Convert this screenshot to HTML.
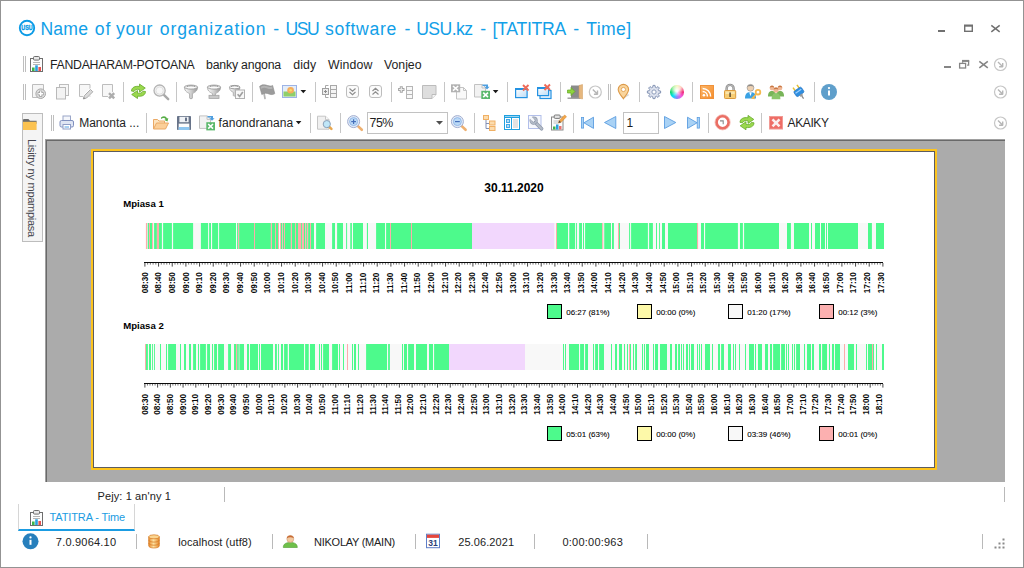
<!DOCTYPE html><html><head><meta charset="utf-8"><title>USU</title><style>
html,body{margin:0;padding:0;}
body{width:1024px;height:568px;position:relative;overflow:hidden;background:#fff;font-family:"Liberation Sans",sans-serif;color:#222;}
.a{position:absolute;}
.win{position:absolute;left:0;top:0;width:1022px;height:566px;border:1px solid #939393;}
.t{position:absolute;white-space:nowrap;line-height:1;}
.sep{position:absolute;width:1px;background:#c6c6c6;}
.grip{position:absolute;width:1px;background:#bebebe;}
svg{position:absolute;overflow:visible;}
.ui{font-size:13px;color:#1e1e1e;}
.st{font-size:11.5px;color:#222;}
</style></head><body>
<div class="win"></div>
<!-- s_title -->
<svg style="left:18px;top:19px" width="18" height="18" viewBox="0 0 18 18"><circle cx="9" cy="9" r="7.200" fill="#fff" stroke="#0c9be6" stroke-width="1.900"/><text x="9" y="11.400" font-size="6.800" font-weight="bold" text-anchor="middle" fill="#0c9be6" stroke="#0c9be6" stroke-width="0.350" font-family="Liberation Sans, sans-serif" textLength="11.400" lengthAdjust="spacingAndGlyphs">USU</text></svg>
<div class="t" style="left:40.50px;top:21.00px;font-size:17.6px;color:#12a0e8;letter-spacing:0.169px;">Name</div>
<div class="t" style="left:94.75px;top:21.00px;font-size:17.6px;color:#12a0e8;letter-spacing:1.054px;">of</div>
<div class="t" style="left:116.00px;top:21.00px;font-size:17.6px;color:#12a0e8;letter-spacing:0.673px;">your</div>
<div class="t" style="left:159.75px;top:21.00px;font-size:17.6px;color:#12a0e8;letter-spacing:0.894px;">organization</div>
<div class="t" style="left:273.20px;top:21.00px;font-size:17.6px;color:#12a0e8;">-</div>
<div class="t" style="left:285.50px;top:21.00px;font-size:17.6px;color:#12a0e8;letter-spacing:-1.500px;">USU</div>
<div class="t" style="left:325.00px;top:21.00px;font-size:17.6px;color:#12a0e8;letter-spacing:0.675px;">software</div>
<div class="t" style="left:404.40px;top:21.00px;font-size:17.6px;color:#12a0e8;">-</div>
<div class="t" style="left:416.25px;top:21.00px;font-size:17.6px;color:#12a0e8;letter-spacing:-0.583px;">USU.kz</div>
<div class="t" style="left:480.30px;top:21.00px;font-size:17.6px;color:#12a0e8;">-</div>
<div class="t" style="left:492.50px;top:21.00px;font-size:17.6px;color:#12a0e8;letter-spacing:-0.276px;">[TATITRA</div>
<div class="t" style="left:573.20px;top:21.00px;font-size:17.6px;color:#12a0e8;">-</div>
<div class="t" style="left:586.25px;top:21.00px;font-size:17.6px;color:#12a0e8;letter-spacing:0.404px;">Time]</div>
<svg style="left:930px;top:18px" width="80" height="20" viewBox="930 18 80 20" fill="none" stroke="#707070" stroke-width="1.400"><path d="M938 31h7" stroke-width="2"/><rect x="964.700" y="25.700" width="7.600" height="5.600"/><path d="M964 25.500h9" stroke-width="2"/><path d="M991.300 25.400L999.700 31.800M999.700 25.400L991.300 31.800" stroke-width="1.500"/></svg>
<!-- s_menu -->
<div class="grip" style="left:23px;top:56px;height:16px"></div><div class="grip" style="left:25px;top:56px;height:16px"></div>
<svg style="left:30px;top:56px" width="13" height="16" viewBox="0 0 13 16"><rect x="0.5" y="2.5" width="12" height="13" fill="#fdfdfd" stroke="#6e6e6e"/><rect x="3.5" y="0.5" width="6" height="3.6" rx="1" fill="#e8e8e8" stroke="#6e6e6e"/><path d="M3 6.5h7M3 8.5h7" stroke="#b5b5b5" stroke-width="1"/><rect x="2" y="11.5" width="2.6" height="3.5" fill="#3cb54a"/><rect x="5.2" y="9.3" width="2.6" height="5.7" fill="#2b9fe0"/><rect x="8.4" y="11" width="2.6" height="4" fill="#e8534f"/></svg>
<div class="t" style="left:50.00px;top:59.00px;font-size:12.3px;color:#1e1e1e;letter-spacing:-0.275px;">FANDAHARAM-POTOANA</div>
<div class="t" style="left:206.00px;top:59.00px;font-size:12.3px;color:#1e1e1e;letter-spacing:-0.190px;">banky angona</div>
<div class="t" style="left:293.30px;top:59.00px;font-size:12.3px;color:#1e1e1e;letter-spacing:0.109px;">didy</div>
<div class="t" style="left:328.00px;top:59.00px;font-size:12.3px;color:#1e1e1e;letter-spacing:0.125px;">Window</div>
<div class="t" style="left:384.00px;top:59.00px;font-size:12.3px;color:#1e1e1e;letter-spacing:-0.020px;">Vonjeo</div>
<svg style="left:940px;top:56px" width="70" height="18" viewBox="940 56 70 18" fill="none" stroke="#858585" stroke-width="1.3"><path d="M944 67h7" stroke-width="2"/><path d="M962.600 61.200h6v4h-1.500M962.600 61.200v1.600" /><path d="M962 60.800h7.200" stroke-width="1.800"/><rect x="959.6" y="63.4" width="6" height="4.6" fill="#fff"/><path d="M979.300 61.300L987.800 67.800M987.800 61.300L979.300 67.800" stroke-width="1.600"/><g fill="none" stroke="#c6c6c6" stroke-width="1.200"><circle cx="1000.5" cy="64.5" r="6"/><path d="M998.0 62.0l4.500 4.500M1002.7 66.9v-3.800M1002.9 66.7h-3.800" stroke="#b6b6b6" stroke-width="1.400"/></g></svg>
<!-- s_tb1 -->
<div class="grip" style="left:23px;top:84px;height:16px"></div><div class="grip" style="left:25px;top:84px;height:16px"></div>
<div class="sep" style="left:123px;top:82px;height:20px;background:#c6c6c6"></div>
<div class="sep" style="left:176px;top:82px;height:20px;background:#c6c6c6"></div>
<div class="sep" style="left:252px;top:82px;height:20px;background:#c6c6c6"></div>
<div class="sep" style="left:315px;top:82px;height:20px;background:#c6c6c6"></div>
<div class="sep" style="left:391px;top:82px;height:20px;background:#c6c6c6"></div>
<div class="sep" style="left:444px;top:82px;height:20px;background:#c6c6c6"></div>
<div class="sep" style="left:507px;top:82px;height:20px;background:#c6c6c6"></div>
<div class="sep" style="left:560px;top:82px;height:20px;background:#c6c6c6"></div>
<div class="sep" style="left:639px;top:82px;height:20px;background:#c6c6c6"></div>
<div class="sep" style="left:692px;top:82px;height:20px;background:#c6c6c6"></div>
<div class="sep" style="left:814px;top:82px;height:20px;background:#c6c6c6"></div>
<div class="grip" style="left:608px;top:84px;height:16px"></div><div class="grip" style="left:610px;top:84px;height:16px"></div>
<div class="a" style="left:670.200px;top:85.200px;width:13.600px;height:13.600px;border-radius:50%;background:radial-gradient(circle at 48% 42%,#fff 0,rgba(255,255,255,0.85) 12%,rgba(255,255,255,0) 55%),conic-gradient(from 0deg,#f6f6b8,#ffcfc0 40deg,#f0307c 90deg,#f25ce0 135deg,#8c84ff 180deg,#08e0f6 225deg,#06d86c 270deg,#a4f09c 320deg,#f6f6b8 360deg)"></div>
<svg style="left:0;top:0" width="1024" height="140" viewBox="0 0 1024 140"><g transform="translate(32 84)"><path d="M0.500 0.500h11v13h-11z" fill="#f5f5f5" stroke="#bdbdbd"/><circle cx="8.700" cy="9.700" r="4.800" fill="#dedede" stroke="#a9a9a9"/><path d="M8.700 6.700v6M5.700 9.700h6" stroke="#9c9c9c" stroke-width="3"/><path d="M8.700 7.300v4.800M6.300 9.700h4.800" stroke="#fff" stroke-width="1.500"/></g>
<g transform="translate(56 84)"><rect x="3.500" y="0.500" width="9" height="11" fill="#f7f7f7" stroke="#bdbdbd"/><rect x="0.500" y="3.500" width="9" height="11.500" fill="#f3f3f3" stroke="#b9b9b9"/></g>
<g transform="translate(79 84)"><path d="M0.500 0.500h10.500v12h-10.500z" fill="#f7f7f7" stroke="#bdbdbd"/><path d="M4.300 15l1-3.300 6.200-6.200 2.300 2.300-6.200 6.200z" fill="#d9d9d9" stroke="#fff" stroke-width="2.200"/><path d="M4.300 15l1-3.300 6.200-6.200 2.300 2.300-6.200 6.200z" fill="#dadada" stroke="#a4a4a4" stroke-width="0.900"/><path d="M4.300 15l0.600-2 1.400 1.400z" fill="#8a8a8a"/></g>
<g transform="translate(102 84)"><path d="M0.500 0.500h10v12h-10z" fill="#f7f7f7" stroke="#bdbdbd"/><path d="M7 9.200l5.200 5.200M12.200 9.200l-5.200 5.200" stroke="#fff" stroke-width="4"/><path d="M7 9.200l5.200 5.200M12.200 9.200l-5.200 5.200" stroke="#adadad" stroke-width="2.500"/></g>
<g transform="translate(130.5 83.5)"><path d="M1 7.600c0-3.600 3.600-5.400 8-4.600v-2.400l5.800 4-5.800 4v-2.600c-2.600-0.500-4.600 0.100-5.400 1.900z" fill="#9ad84e" stroke="#67ab2b" stroke-width="0.800" stroke-linejoin="round"/><path d="M1 7.600c0-3.600 3.600-5.400 8-4.600v-2.400l5.800 4-5.800 4v-2.600c-2.600-0.500-4.600 0.100-5.400 1.900z" transform="rotate(180 8 7.800)" fill="#9ad84e" stroke="#67ab2b" stroke-width="0.800" stroke-linejoin="round"/></g>
<g transform="translate(153 84)"><path d="M10.6 10.6l4.600 4.600" stroke="#a9a9a9" stroke-width="2.4" stroke-linecap="round"/><circle cx="6.600" cy="6.600" r="5.600" fill="#f0f0f0" stroke="#b3b3b3" stroke-width="1.3"/><circle cx="6.600" cy="6.600" r="3.600" fill="#f8f8f8" stroke="#dadada" stroke-width="0.8"/></g>
<g transform="translate(184 84.5)"><defs><linearGradient id="fg" x1="0" y1="0" x2="1" y2="0"><stop offset="0" stop-color="#fbfbfb"/><stop offset="0.5" stop-color="#d0d0d0"/><stop offset="1" stop-color="#979797"/></linearGradient></defs><path d="M0.400 2.600C0.400 7.2 4.4 8.3 5.6 9.2V13.6a1.400 0.600 0 0 0 2.800 0V9.2C9.6 8.3 13.6 7.2 13.6 2.600z" fill="url(#fg)" stroke="#a2a2a2" stroke-width="0.800"/><ellipse cx="7.0" cy="2.600" rx="6.6" ry="2.0" fill="#fbfbfb" stroke="#9c9c9c" stroke-width="0.900"/><path d="M2.5 2.300c1.600-1.300 7.4-1.300 9.0 0" fill="none" stroke="#8e8e8e" stroke-width="0.900"/></g>
<g transform="translate(207 84.5)"><defs><linearGradient id="fg" x1="0" y1="0" x2="1" y2="0"><stop offset="0" stop-color="#fbfbfb"/><stop offset="0.5" stop-color="#d0d0d0"/><stop offset="1" stop-color="#979797"/></linearGradient></defs><path d="M0.400 2.600C0.400 7.2 4.4 8.3 5.6 9.2V11a1.400 0.600 0 0 0 2.800 0V9.2C9.6 8.3 13.6 7.2 13.6 2.600z" fill="url(#fg)" stroke="#a2a2a2" stroke-width="0.800"/><ellipse cx="7.0" cy="2.600" rx="6.6" ry="2.0" fill="#fbfbfb" stroke="#9c9c9c" stroke-width="0.900"/><path d="M2.5 2.300c1.600-1.300 7.4-1.300 9.0 0" fill="none" stroke="#8e8e8e" stroke-width="0.900"/><rect x="2" y="10.800" width="10" height="3.200" fill="#c9c9c9" stroke="#a6a6a6" stroke-width="0.800"/></g>
<g transform="translate(229 84.5)"><defs><linearGradient id="fg" x1="0" y1="0" x2="1" y2="0"><stop offset="0" stop-color="#fbfbfb"/><stop offset="0.5" stop-color="#d0d0d0"/><stop offset="1" stop-color="#979797"/></linearGradient></defs><path d="M0.400 2.600C0.400 6.12 3.1 7.055000000000001 4.300000000000001 7.819999999999999V11a1.400 0.600 0 0 0 2.800 0V7.819999999999999C8.3 7.055000000000001 11.0 6.12 11.0 2.600z" fill="url(#fg)" stroke="#a2a2a2" stroke-width="0.800"/><ellipse cx="5.7" cy="2.600" rx="5.3" ry="1.7" fill="#fbfbfb" stroke="#9c9c9c" stroke-width="0.900"/><path d="M1.8300000000000003 2.300c1.600-1.300 6.140000000000001-1.300 7.74 0" fill="none" stroke="#8e8e8e" stroke-width="0.900"/><rect x="6.500" y="5.500" width="9" height="8.500" fill="#f8f8f8" stroke="#b0b0b0"/><path d="M8.600 9.800l2 2.200 3.200-4.400" fill="none" stroke="#a0a0a0" stroke-width="1.700"/></g>
<g transform="translate(259 84)"><path d="M3.600 1.500l2.400 13" stroke="#b4b4b4" stroke-width="1.700" stroke-linecap="round"/><path d="M0.600 2.400c3-2.400 5.800-1.600 8.200-0.800 2.200 0.700 3.600 0.500 4.800-0.200l2.200 8.200c-1.600 1.200-3.600 1.300-5.800 0.400-2.400-1-4.600-1.200-7.200 0.600z" fill="#9b9b9b" stroke="#8b8b8b" stroke-width="0.600"/><path d="M1.500 3c2.600-1.800 5-1.200 7.200-0.400 1.800 0.600 3.200 0.600 4.400 0l0.500 2c-1.600 0.800-3.400 0.600-5.200-0.100-2-0.800-4.200-1-6.300 0.300z" fill="#b4b4b4"/></g>
<g transform="translate(282 85)"><rect x="0.500" y="0.500" width="14" height="12" fill="#e3edf9" stroke="#9db3e6"/><rect x="1.500" y="6.500" width="12" height="5" fill="#8fcf6a"/><circle cx="8.600" cy="5.200" r="3.300" fill="#f6ad5c"/><circle cx="8.600" cy="5.200" r="1.300" fill="#f8dc6a"/></g>
<g transform="translate(300.5 90)"><path d="M0 0h5.600l-2.800 3.200z" fill="#1a1a1a"/></g>
<g transform="translate(322 85)"><rect x="8.500" y="0.500" width="6" height="12" fill="#f4f4f4" stroke="#a8a8a8"/><path d="M8.500 4.500h6M8.500 8.500h6" stroke="#a8a8a8"/><path d="M6.500 0.500h-3v12h3" fill="none" stroke="#a8a8a8"/><rect x="0.500" y="3.500" width="6" height="6" fill="#ededed" stroke="#a0a0a0"/><path d="M3.500 5v3M2 6.500h3" stroke="#8c8c8c"/></g>
<g transform="translate(346 85)"><rect x="0.500" y="0.500" width="12" height="12" rx="2.500" fill="#fbfbfb" stroke="#bdbdbd"/><path d="M3.500 3.500l3 2.600 3-2.600M3.500 7l3 2.600 3-2.600" fill="none" stroke="#8e8e8e" stroke-width="1.200"/></g>
<g transform="translate(369 85)"><rect x="0.500" y="0.500" width="12" height="12" rx="2.500" fill="#fbfbfb" stroke="#bdbdbd"/><path d="M3.500 6l3-2.600 3 2.600M3.500 9.500l3-2.600 3 2.600" fill="none" stroke="#8e8e8e" stroke-width="1.200"/></g>
<g transform="translate(398 86)"><path d="M3.300 0.300v6.400M0.100 3.500h6.400" stroke="#a6a6a6" stroke-width="3"/><path d="M3.300 1.200v4.600M1 3.500h4.600" stroke="#efefef" stroke-width="1.200"/><rect x="8.500" y="0.500" width="6" height="12" fill="#f8f8f8" stroke="#b6b6b6"/><path d="M8.500 4.500h6M8.500 8.500h6" stroke="#b6b6b6"/></g>
<g transform="translate(422 85)"><path d="M0.500 0.500h13.500v9l-4 4h-9.500z" fill="#dedede" stroke="#bcbcbc"/><path d="M14 9.500h-4v4" fill="#f6f6f6" stroke="#bcbcbc"/></g>
<g transform="translate(451 84)"><path d="M5.500 3.500h7l3 3v8.500h-10z" fill="#f9f9f9" stroke="#c4c4c4"/><path d="M12.500 3.500v3h3" fill="none" stroke="#c4c4c4"/><rect x="0" y="0.300" width="9.200" height="8" fill="#b2b2b2"/><path d="M2 2l5.200 4.600M7.200 2l-5.200 4.600" stroke="#fff" stroke-width="1.600"/></g>
<g transform="translate(474 84)"><path d="M0.500 0.500h8l3 3v9.500h-11z" fill="#f2f2f2" stroke="#c2c2c2"/><path d="M8 1v3h3" fill="none" stroke="#c2c2c2"/><path d="M8.500 0.600h5.500v2.200h1.600l-2.600 2.600-2.600-2.600h1.600v-0.800h-3.500z" fill="#4f9fe0"/><rect x="7.300" y="6.800" width="8.700" height="8.200" fill="#5bb86c"/><path d="M9.200 8.600l4.800 4.600M14 8.600l-4.800 4.600" stroke="#fff" stroke-width="1.600"/></g>
<g transform="translate(492.8 90)"><path d="M0 0h5.600l-2.800 3.200z" fill="#1a1a1a"/></g>
<g transform="translate(515 84)"><defs><linearGradient id="wg" x1="0" y1="0" x2="1" y2="1"><stop offset="0" stop-color="#fff"/><stop offset="1" stop-color="#bcdcf6"/></linearGradient></defs><rect x="0.600" y="4.600" width="11.500" height="9" fill="url(#wg)" stroke="#2492e2" stroke-width="1.200"/><path d="M0.600 5.200h11.500" stroke="#2492e2" stroke-width="1.600"/><path d="M8 1l5.500 5.500M13.500 1l-5.500 5.500" stroke="#ee6a58" stroke-width="1.900"/></g>
<g transform="translate(537 84)"><defs><linearGradient id="wg" x1="0" y1="0" x2="1" y2="1"><stop offset="0" stop-color="#fff"/><stop offset="1" stop-color="#bcdcf6"/></linearGradient></defs><rect x="3" y="6.500" width="11" height="8" fill="#eaf3fc" stroke="#2492e2" stroke-width="1.200"/><rect x="0.600" y="3.600" width="11" height="8" fill="url(#wg)" stroke="#2492e2" stroke-width="1.200"/><path d="M0.600 4.200h11" stroke="#2492e2" stroke-width="1.600"/><path d="M7.500 0.500l5.500 5.500M13 0.500l-5.500 5.500" stroke="#ee6a58" stroke-width="1.900"/></g>
<g transform="translate(567 84.5)"><rect x="4" y="1" width="9" height="12.500" fill="#8b8b8b"/><path d="M0.500 13.700h13" stroke="#9a9a9a" stroke-width="1.400"/><path d="M12 1l3.500-1v14.500l-3.500-1z" fill="#e6b77e" stroke="#d09a5c" stroke-width="0.500"/><path d="M0.500 5.500h3.500v-2.500l4 4-4 4v-2.500h-3.500z" fill="#8fd43e" stroke="#62a822" stroke-width="0.700"/></g>
<g fill="none" stroke="#c6c6c6" stroke-width="1.200"><circle cx="595.3" cy="92" r="6"/><path d="M592.8 89.5l4.500 4.500M597.5 94.4v-3.800M597.6999999999999 94.2h-3.800" stroke="#b6b6b6" stroke-width="1.400"/></g>
<g transform="translate(617.8 84.3)"><path d="M6 14.200l5.500-3.600-1.500-1z" fill="#d6d6d6"/><path d="M5.600 14.500c-3-4.200-5.200-6.400-5.200-9.200a5.200 5.200 0 0 1 10.400 0c0 2.800-2.200 5-5.200 9.200z" fill="#fad59c" stroke="#dc9a4a" stroke-width="1.100"/><circle cx="5.600" cy="5.200" r="2.100" fill="#fff" stroke="#dc9a4a" stroke-width="0.800"/></g>
<g transform="translate(647 85)"><path d="M13.62 6.00 L13.62 8.00 L11.72 8.31 L11.26 9.41 L12.39 10.98 L10.98 12.39 L9.42 11.26 L8.31 11.72 L8.00 13.62 L6.00 13.62 L5.69 11.72 L4.59 11.26 L3.02 12.39 L1.61 10.98 L2.74 9.42 L2.28 8.31 L0.38 8.00 L0.38 6.00 L2.28 5.69 L2.74 4.59 L1.61 3.02 L3.02 1.61 L4.58 2.74 L5.69 2.28 L6.00 0.38 L8.00 0.38 L8.31 2.28 L9.41 2.74 L10.98 1.61 L12.39 3.02 L11.26 4.58 L11.72 5.69z" fill="#dde2ee" stroke="#8494b4" stroke-width="1" stroke-linejoin="round"/><circle cx="7" cy="7" r="2.100" fill="#fff" stroke="#8494b4" stroke-width="0.900"/></g>
<g transform="translate(700 85)"><defs><linearGradient id="rg" x1="0" y1="0" x2="1" y2="1"><stop offset="0" stop-color="#fbb568"/><stop offset="1" stop-color="#f68e2c"/></linearGradient></defs><rect x="0.500" y="0.500" width="13" height="13" fill="url(#rg)" stroke="#f0923a"/><circle cx="3.900" cy="10.300" r="1.300" fill="#fff"/><path d="M2.600 6.600a4.800 4.800 0 0 1 4.800 4.800M2.600 3.400a8 8 0 0 1 8 8" fill="none" stroke="#fff" stroke-width="1.500"/></g>
<g transform="translate(724 84)"><path d="M2.600 7v-2.600a3.500 3.500 0 0 1 7 0v2.600" fill="none" stroke="#8e8e8e" stroke-width="2.400"/><path d="M2.600 7v-2.600a3.500 3.500 0 0 1 7 0v2.600" fill="none" stroke="#c8c8c8" stroke-width="0.800"/><rect x="0.500" y="6.500" width="11.200" height="8" rx="0.800" fill="#f7cd74" stroke="#dc9a3c"/><rect x="1.500" y="7.500" width="9.200" height="2.500" fill="#fbe4a8"/><path d="M6.100 8.600v4.400" stroke="#5a4a30" stroke-width="1.500"/></g>
<g transform="translate(745 84)"><circle cx="5.500" cy="3.800" r="3.400" fill="#ecd0b2" stroke="#8a8a8a" stroke-width="0.600"/><path d="M2.200 2.800c0.600-2.600 5.600-2.800 6.600 0-1.600-1-4.600-1-6.600 0z" fill="#8a8a8a"/><path d="M0 14.500c0-4.500 2-6.500 5.500-6.500s5.500 2 5.500 6.500z" fill="#3aa2e4"/><path d="M4.200 8.200l1.300 4 1.300-4z" fill="#fff"/><circle cx="13" cy="8.200" r="2.300" fill="none" stroke="#f4b850" stroke-width="1.800"/><path d="M11.400 10l-3.800 4 2.200 0.400" fill="none" stroke="#f4b850" stroke-width="1.700"/></g>
<g transform="translate(768 85)"><circle cx="4" cy="3" r="2.4" fill="#f0b896"/><path d="M0 11.5c0-4 1.5-5.5 4-5.5 s4 1.5 4 5.5z" fill="#78b458"/><circle cx="12" cy="3" r="2.4" fill="#f0b896"/><path d="M8 11.5c0-4 1.5-5.5 4-5.5 s4 1.5 4 5.5z" fill="#78b458"/><circle cx="8" cy="5" r="2.64" fill="#f0b896"/><path d="M3.5999999999999996 14.350000000000001c0-4.4 1.6500000000000001-6.050000000000001 4.4-6.050000000000001 s4.4 1.6500000000000001 4.4 6.050000000000001z" fill="#8cc66a"/><path d="M1.800 2.600c0.200-2.600 4.200-2.600 4.400 0-1.400-0.800-3-0.800-4.400 0zM9.800 2.600c0.200-2.600 4.200-2.600 4.400 0-1.400-0.800-3-0.800-4.400 0zM5.600 4.600c0.200-2.800 4.600-2.800 4.800 0-1.600-0.800-3.200-0.800-4.800 0z" fill="#c87844"/></g>
<g transform="translate(793 85)"><g transform="rotate(-35 6 7)"><path d="M3.600 0v4M8.400 0v4" stroke="#e6c030" stroke-width="1.500"/><rect x="1.500" y="3.600" width="9" height="6.500" rx="1.500" fill="#2f8fe0" stroke="#1f6fc0" stroke-width="0.600"/><path d="M2.500 6h7" stroke="#9fd0ff" stroke-width="1.200"/><path d="M4.500 10h3v2h-3z" fill="#9a9a9a"/><path d="M6 12v3" stroke="#8a8a8a" stroke-width="1.300"/></g></g>
<circle cx="829" cy="92" r="8" fill="#5f9fcb"/><circle cx="829" cy="88.1" r="1.150" fill="#fff"/><path d="M829 90.5v5" stroke="#fff" stroke-width="2"/>
<g fill="none" stroke="#c6c6c6" stroke-width="1.200"><circle cx="1000.5" cy="92" r="6"/><path d="M998.0 89.5l4.500 4.500M1002.7 94.4v-3.800M1002.9 94.2h-3.800" stroke="#b6b6b6" stroke-width="1.400"/></g></svg>
<!-- s_tb2 -->
<div class="a" style="left:22px;top:113px;width:21px;height:129px;background:#f4f4f4;border:1px solid #bdbdbd;box-sizing:border-box"></div>
<div class="grip" style="left:51px;top:115px;height:16px"></div><div class="grip" style="left:53px;top:115px;height:16px"></div>
<div class="sep" style="left:146px;top:113px;height:20px;background:#c6c6c6"></div>
<div class="sep" style="left:310px;top:113px;height:20px;background:#c6c6c6"></div>
<div class="sep" style="left:340px;top:113px;height:20px;background:#c6c6c6"></div>
<div class="sep" style="left:474px;top:113px;height:20px;background:#c6c6c6"></div>
<div class="sep" style="left:573px;top:113px;height:20px;background:#c6c6c6"></div>
<div class="sep" style="left:708px;top:113px;height:20px;background:#c6c6c6"></div>
<div class="sep" style="left:761px;top:113px;height:20px;background:#c6c6c6"></div>
<div class="t" style="left:79.20px;top:117.00px;font-size:12px;color:#1e1e1e;">Manonta ...</div>
<div class="t" style="left:218.60px;top:117.00px;font-size:12px;color:#1e1e1e;letter-spacing:0.036px;">fanondranana</div>
<div class="t" style="left:787.60px;top:117.00px;font-size:12px;color:#1e1e1e;letter-spacing:-0.393px;">AKAIKY</div>
<div class="a" style="left:367px;top:112px;width:81px;height:22px;border:1px solid #c2c2c2;box-sizing:border-box;background:#fff"></div>
<div class="t" style="left:369.60px;top:117.00px;font-size:12.4px;color:#1e1e1e;letter-spacing:-0.606px;">75%</div>
<div class="a" style="left:623px;top:112px;width:36px;height:22px;border:1px solid #c2c2c2;box-sizing:border-box;background:#fff"></div>
<div class="t" style="left:626.40px;top:117.00px;font-size:12px;color:#1e1e1e;">1</div>
<svg style="left:0;top:0" width="1024" height="140" viewBox="0 0 1024 140"><g transform="translate(23 119)"><path d="M0 1.200c0-0.700 0.500-1.200 1.200-1.200h4.200l1.600 1.800h6.600v3h-13.600z" fill="#6d6d6d"/><rect x="0" y="2.800" width="13.600" height="8.200" fill="#fbc250"/></g>
<g transform="translate(59.5 115.5)"><rect x="3.500" y="0.500" width="7.500" height="6" fill="#f4f6fb" stroke="#9aa6c8"/><rect x="0.500" y="5" width="13.500" height="6.500" rx="1.500" fill="#dfe5f3" stroke="#7f8fbe"/><rect x="3.500" y="9" width="7.500" height="4.500" fill="#fff" stroke="#8f9dc6"/><path d="M5 11.500h4.500" stroke="#6fb0e8" stroke-width="1.200"/></g>
<g transform="translate(153 115)"><path d="M0.500 14v-9.500h4l1.500 1.500h5.500v2" fill="#fde3bd" stroke="#eaa965"/><path d="M0.500 14l3-6h12l-3 6z" fill="#fbcf98" stroke="#eaa965"/><path d="M8 2.500c2.500-2 5-1.500 6 1l1.300-0.600-0.800 3.600-3.200-1.600 1.300-0.600c-0.800-1.600-2.600-1.800-4.600-0.400z" fill="#58ae48"/></g>
<g transform="translate(177 116)"><rect x="0" y="0" width="14" height="14" rx="0.800" fill="#677389"/><rect x="2.400" y="0.800" width="9.200" height="5.400" fill="#eff2f6"/><rect x="8" y="1.600" width="2" height="3.600" fill="#677389"/><rect x="1.700" y="7.600" width="10.600" height="6.400" fill="#fcfcfc"/><rect x="1.700" y="11" width="10.600" height="3" fill="#8ec6f0"/></g>
<g transform="translate(199 115.4)"><path d="M0.500 0.500h8l3 3v9.500h-11z" fill="#f2f2f2" stroke="#c2c2c2"/><path d="M8 1v3h3" fill="none" stroke="#c2c2c2"/><path d="M8.500 0.600h5.500v2.200h1.600l-2.600 2.600-2.600-2.600h1.600v-0.800h-3.500z" fill="#4f9fe0"/><rect x="7.300" y="6.800" width="8.700" height="8.200" fill="#5bb86c"/><path d="M9.200 8.600l4.800 4.600M14 8.600l-4.800 4.600" stroke="#fff" stroke-width="1.600"/></g>
<g transform="translate(295.8 121)"><path d="M0 0h5.600l-2.800 3.200z" fill="#1a1a1a"/></g>
<g transform="translate(317 115.7)"><path d="M0.500 0.500h8l3.500 3.500v9.500h-11.500z" fill="#f0f0f0" stroke="#c6c6c6"/><path d="M8.500 0.500v3.500h3.500" fill="#fafafa" stroke="#c6c6c6"/><path d="M11.800 10.800l2.600 2.400" stroke="#e8a850" stroke-width="2.600" stroke-linecap="round"/><circle cx="9.800" cy="8.400" r="3.600" fill="#bfe6f8" stroke="#8aa0b8" stroke-width="1"/></g>
<g transform="translate(347 115.2)"><path d="M10.400 10.400l4.400 4.200" stroke="#eeb070" stroke-width="2.600" stroke-linecap="round"/><circle cx="6.600" cy="6.400" r="6" fill="#e4ecf8" stroke="#a2aed0" stroke-width="1"/><circle cx="6.600" cy="6.400" r="4" fill="#bcdaf6" stroke="#86aee4" stroke-width="0.800"/><path d="M4.200 6.400h4.800" stroke="#4670bc" stroke-width="1.200"/><path d="M6.600 4v4.800" stroke="#4670bc" stroke-width="1.200"/></g>
<g transform="translate(436 121)"><path d="M0 0h7l-3.500 3.800z" fill="#4f4f4f"/></g>
<g transform="translate(450.8 115.2)"><path d="M10.400 10.400l4.400 4.200" stroke="#eeb070" stroke-width="2.600" stroke-linecap="round"/><circle cx="6.600" cy="6.400" r="6" fill="#e4ecf8" stroke="#a2aed0" stroke-width="1"/><circle cx="6.600" cy="6.400" r="4" fill="#bcdaf6" stroke="#86aee4" stroke-width="0.800"/><path d="M4.200 6.400h4.800" stroke="#4670bc" stroke-width="1.200"/></g>
<g transform="translate(483 115)"><path d="M3 4.500v9h4M3 8.500h4" fill="none" stroke="#8290b4" stroke-width="1"/><rect x="0.500" y="0.500" width="5" height="4" fill="#fcdcae" stroke="#f0b064"/><rect x="6.500" y="6" width="5.500" height="4" fill="#fcdcae" stroke="#f0b064"/><rect x="6.500" y="11.500" width="5.500" height="4" fill="#fcdcae" stroke="#f0b064"/></g>
<g transform="translate(504 115)"><g shape-rendering="crispEdges"><rect x="0.500" y="0.500" width="15" height="14" fill="#fff" stroke="#1fa0e0"/><path d="M1 1.500h14" stroke="#9ad4f2"/><path d="M1 2.500h14M7.500 3v11" stroke="#1fa0e0"/><rect x="9" y="4" width="5" height="9" fill="#e2e2e2"/><rect x="2.500" y="4.500" width="3" height="3" fill="#b4dcf6" stroke="#44a8e6"/><rect x="2.500" y="9.500" width="3" height="3" fill="#b4dcf6" stroke="#44a8e6"/></g></g>
<g transform="translate(528 115)"><rect x="0.500" y="0.500" width="12.500" height="13" fill="#f6f8fc" stroke="#b2bfea"/><path d="M7.400 7.400l6.200 6.400" stroke="#8e98aa" stroke-width="3.600" stroke-linecap="round"/><path d="M7.400 7.400l6.200 6.400" stroke="#b4bcc8" stroke-width="2.200" stroke-linecap="round"/><circle cx="5.600" cy="5.600" r="2.700" fill="none" stroke="#8e98aa" stroke-width="2.800"/><circle cx="5.600" cy="5.600" r="2.700" fill="none" stroke="#b4bcc8" stroke-width="1.500"/><path d="M5.200 5.200l-3.600-3.600" stroke="#f6f8fc" stroke-width="2.400"/></g>
<g transform="translate(551 114.5)"><rect x="0.500" y="2.500" width="11.500" height="13" fill="#fbfbfb" stroke="#8a8a8a"/><rect x="3.200" y="0.500" width="6" height="3.400" rx="1" fill="#e4e4e4" stroke="#7a7a7a"/><path d="M2.500 6.500h6M2.500 8.500h5" stroke="#c0c0c0"/><rect x="2" y="12" width="2.500" height="3" fill="#3cb54a"/><rect x="5" y="10" width="2.500" height="5" fill="#2b9fe0"/><rect x="8" y="11.500" width="2.500" height="3.500" fill="#e8736f"/><path d="M7.500 8.500l0.800-2.600 5.400-5.400 1.800 1.800-5.400 5.400z" fill="#f2a64a" stroke="#d88a30" stroke-width="0.600"/><path d="M7.500 8.500l0.800-2.600 1.800 1.800z" fill="#4a4a4a"/></g>
<g transform="translate(581 116.7)"><rect x="0.400" y="0.800" width="2.200" height="10.600" fill="#a9d2f5" stroke="#5b9de0" stroke-width="0.800"/><path d="M12.500 0.500v11.200l-9.600-5.600z" fill="#a9d2f5" stroke="#5b9de0" stroke-width="0.900" stroke-linejoin="round"/></g>
<g transform="translate(604 116)"><path d="M11.800 0.500v12l-11.300-6z" fill="#a9d2f5" stroke="#5b9de0" stroke-width="0.900" stroke-linejoin="round"/></g>
<g transform="translate(664 116)"><path d="M0.500 0.500v12l11.300-6z" fill="#a9d2f5" stroke="#5b9de0" stroke-width="0.900" stroke-linejoin="round"/></g>
<g transform="translate(687 116.7)"><rect x="10.200" y="0.800" width="2.200" height="10.600" fill="#a9d2f5" stroke="#5b9de0" stroke-width="0.800"/><path d="M0.500 0.500v11.200l9.600-5.600z" fill="#a9d2f5" stroke="#5b9de0" stroke-width="0.900" stroke-linejoin="round"/></g>
<circle cx="722.6" cy="122.3" r="6.100" fill="#fff" stroke="#ea6e64" stroke-width="2.800"/><circle cx="722.6" cy="122.3" r="7.600" fill="none" stroke="#f4aaa2" stroke-width="0.700"/><path d="M720.0 120.89999999999999h3.200v3.400" fill="none" stroke="#8a8a8a" stroke-width="1.100"/>
<g transform="translate(739 114.8)"><path d="M1 7.600c0-3.600 3.600-5.400 8-4.600v-2.400l5.800 4-5.800 4v-2.600c-2.600-0.500-4.600 0.100-5.400 1.900z" fill="#9ad84e" stroke="#67ab2b" stroke-width="0.800" stroke-linejoin="round"/><path d="M1 7.600c0-3.600 3.600-5.400 8-4.600v-2.400l5.800 4-5.800 4v-2.600c-2.600-0.500-4.600 0.100-5.400 1.900z" transform="rotate(180 8 7.800)" fill="#9ad84e" stroke="#67ab2b" stroke-width="0.800" stroke-linejoin="round"/></g>
<g transform="translate(769 116)"><rect x="0.500" y="0.500" width="13" height="12.500" fill="#ee6d66" stroke="#f29a94"/><path d="M3.500 3.300l7 7M10.500 3.300l-7 7" stroke="#fbeeee" stroke-width="2.600"/></g>
<g fill="none" stroke="#c6c6c6" stroke-width="1.200"><circle cx="1000.5" cy="123" r="6"/><path d="M998.0 120.5l4.500 4.500M1002.7 125.4v-3.800M1002.9 125.2h-3.800" stroke="#b6b6b6" stroke-width="1.400"/></g></svg>
<!-- s_preview -->
<div class="a" style="left:45px;top:139px;width:960px;height:343px;background:#ababab;box-sizing:border-box;border-left:1px solid #a0a0a0;border-top:1px solid #a0a0a0"></div>
<div class="a" style="left:46px;top:140px;width:959px;height:342px;box-sizing:border-box;border-left:1px solid #696969;border-top:1px solid #696969"></div>
<div class="a" style="left:91px;top:149px;width:846px;height:321px;box-sizing:border-box;border:2px solid #fdc41e;background:#fff"></div>
<div class="a" style="left:93px;top:151px;width:842px;height:317px;box-sizing:border-box;border:1px solid #5c5c60;background:#fff"></div>
<div class="t" style="left:26.300px;top:138.800px;font-size:11px;color:#46464e;transform-origin:0 0;transform:rotate(90deg) translate(0,-100%);letter-spacing:-0.270px" id="vtab">Lisitry ny mpampiasa</div>
<!-- s_report -->
<div class="t" style="left:484.30px;top:182.00px;font-size:12px;color:#000;font-weight:bold;">30.11.2020</div>
<div class="t" style="left:123.20px;top:199.00px;font-size:9.6px;color:#000;font-weight:bold;">Mpiasa 1</div>
<div class="t" style="left:123.20px;top:321.00px;font-size:9.6px;color:#000;font-weight:bold;">Mpiasa 2</div>
<svg style="left:0;top:0" width="1024" height="568" viewBox="0 0 1024 568"><rect x="146" y="223" width="738" height="26" fill="#f8f8f8"/><path d="M472 223h82.3v26h-82.3z" fill="#f2d7fd"/><path d="M147.75 223h1.25v26h-1.25zM150 223h2.1v26h-2.1zM154.1 223h2.8v26h-2.8zM159 223h2.9v26h-2.9zM163.1 223h8.8v26h-8.8zM173.1 223h20.0v26h-20.0zM200.9 223h7.2v26h-7.2zM209.1 223h1.9v26h-1.9zM212.1 223h6.0v26h-6.0zM219.1 223h16.9v26h-16.9zM237.1 223h1.0v26h-1.0zM239.1 223h14.9v26h-14.9zM255 223h15.9v26h-15.9zM271.9 223h3.1v26h-3.1zM276 223h2v26h-2zM280.9 223h1.2v26h-1.2zM282.75 223h1.25v26h-1.25zM285 223h5.9v26h-5.9zM291.9 223h3.1v26h-3.1zM296 223h2v26h-2zM301.1 223h1.0v26h-1.0zM304 223h1.25v26h-1.25zM306.1 223h1.0v26h-1.0zM308.1 223h1.9v26h-1.9zM311 223h3v26h-3zM316.1 223h8.9v26h-8.9zM332.1 223h2.9v26h-2.9zM337.1 223h5.9v26h-5.9zM346.1 223h1.0v26h-1.0zM350.25 223h1.65v26h-1.65zM353 223h10v26h-10zM366.9 223h1.1v26h-1.1zM376.1 223h8.9v26h-8.9zM386.1 223h3.9v26h-3.9zM391 223h20v26h-20zM412 223h60v26h-60zM557 223h11v26h-11zM569.25 223h5.85v26h-5.85zM576.1 223h0.9v26h-0.9zM579.1 223h2.9v26h-2.9zM583 223h1v26h-1zM585.1 223h17.15v26h-17.15zM604.25 223h6.75v26h-6.75zM612 223h1.9v26h-1.9zM619 223h1v26h-1zM629.1 223h1.0v26h-1.0zM631.1 223h16.8v26h-16.8zM649.1 223h3.8v26h-3.8zM656 223h1v26h-1zM659.1 223h0.9v26h-0.9zM662 223h3v26h-3zM668 223h29v26h-29zM701 223h3v26h-3zM705.1 223h32.8v26h-32.8zM740 223h2.9v26h-2.9zM744.1 223h34.9v26h-34.9zM787 223h3.9v26h-3.9zM794 223h15v26h-15zM811 223h1v26h-1zM815 223h5v26h-5zM821 223h4v26h-4zM826 223h1v26h-1zM828 223h30v26h-30zM868 223h3.9v26h-3.9zM876 223h8v26h-8z" fill="#4dfa8c"/><path d="M145.9 223h1.2v26h-1.2zM149 223h1v26h-1zM152.1 223h1.0v26h-1.0zM156.9 223h2.1v26h-2.1zM238.1 223h1.0v26h-1.0zM254 223h1v26h-1zM270.9 223h1.0v26h-1.0zM275 223h1v26h-1zM278 223h1v26h-1zM280 223h0.9v26h-0.9zM282.1 223h0.65v26h-0.65zM284 223h1v26h-1zM290.9 223h1.0v26h-1.0zM295 223h1v26h-1zM298 223h3.1v26h-3.1zM302.1 223h1.9v26h-1.9zM305.25 223h0.85v26h-0.85zM307.1 223h1.0v26h-1.0zM310 223h1v26h-1zM390 223h1v26h-1zM411 223h1v26h-1zM556 223h1v26h-1zM602.25 223h1.0v26h-1.0zM618 223h1v26h-1zM697 223h1.1v26h-1.1z" fill="#fcabab"/>
<rect x="144" y="262" width="739" height="1" fill="#0a0a0a" shape-rendering="crispEdges"/><path d="M144.9 263v3.600M158.57 263v3.600M172.23 263v3.600M185.9 263v3.600M199.57 263v3.600M213.23 263v3.600M226.9 263v3.600M240.57 263v3.600M254.23 263v3.600M267.9 263v3.600M281.57 263v3.600M295.23 263v3.600M308.9 263v3.600M322.57 263v3.600M336.23 263v3.600M349.9 263v3.600M363.57 263v3.600M377.23 263v3.600M390.9 263v3.600M404.57 263v3.600M418.23 263v3.600M431.9 263v3.600M445.57 263v3.600M459.23 263v3.600M472.9 263v3.600M486.57 263v3.600M500.23 263v3.600M513.9 263v3.600M527.57 263v3.600M541.23 263v3.600M554.9 263v3.600M568.57 263v3.600M582.23 263v3.600M595.9 263v3.600M609.57 263v3.600M623.23 263v3.600M636.9 263v3.600M650.57 263v3.600M664.23 263v3.600M677.9 263v3.600M691.57 263v3.600M705.23 263v3.600M718.9 263v3.600M732.57 263v3.600M746.23 263v3.600M759.9 263v3.600M773.57 263v3.600M787.23 263v3.600M800.9 263v3.600M814.57 263v3.600M828.23 263v3.600M841.9 263v3.600M855.57 263v3.600M869.23 263v3.600M882.9 263v3.600" stroke="#333" stroke-width="0.900" fill="none"/><path d="M147.63 263v1.600M150.37 263v1.600M153.1 263v1.600M155.83 263v1.600M161.3 263v1.600M164.03 263v1.600M166.77 263v1.600M169.5 263v1.600M174.97 263v1.600M177.7 263v1.600M180.43 263v1.600M183.17 263v1.600M188.63 263v1.600M191.37 263v1.600M194.1 263v1.600M196.83 263v1.600M202.3 263v1.600M205.03 263v1.600M207.77 263v1.600M210.5 263v1.600M215.97 263v1.600M218.7 263v1.600M221.43 263v1.600M224.17 263v1.600M229.63 263v1.600M232.37 263v1.600M235.1 263v1.600M237.83 263v1.600M243.3 263v1.600M246.03 263v1.600M248.77 263v1.600M251.5 263v1.600M256.97 263v1.600M259.7 263v1.600M262.43 263v1.600M265.17 263v1.600M270.63 263v1.600M273.37 263v1.600M276.1 263v1.600M278.83 263v1.600M284.3 263v1.600M287.03 263v1.600M289.77 263v1.600M292.5 263v1.600M297.97 263v1.600M300.7 263v1.600M303.43 263v1.600M306.17 263v1.600M311.63 263v1.600M314.37 263v1.600M317.1 263v1.600M319.83 263v1.600M325.3 263v1.600M328.03 263v1.600M330.77 263v1.600M333.5 263v1.600M338.97 263v1.600M341.7 263v1.600M344.43 263v1.600M347.17 263v1.600M352.63 263v1.600M355.37 263v1.600M358.1 263v1.600M360.83 263v1.600M366.3 263v1.600M369.03 263v1.600M371.77 263v1.600M374.5 263v1.600M379.97 263v1.600M382.7 263v1.600M385.43 263v1.600M388.17 263v1.600M393.63 263v1.600M396.37 263v1.600M399.1 263v1.600M401.83 263v1.600M407.3 263v1.600M410.03 263v1.600M412.77 263v1.600M415.5 263v1.600M420.97 263v1.600M423.7 263v1.600M426.43 263v1.600M429.17 263v1.600M434.63 263v1.600M437.37 263v1.600M440.1 263v1.600M442.83 263v1.600M448.3 263v1.600M451.03 263v1.600M453.77 263v1.600M456.5 263v1.600M461.97 263v1.600M464.7 263v1.600M467.43 263v1.600M470.17 263v1.600M475.63 263v1.600M478.37 263v1.600M481.1 263v1.600M483.83 263v1.600M489.3 263v1.600M492.03 263v1.600M494.77 263v1.600M497.5 263v1.600M502.97 263v1.600M505.7 263v1.600M508.43 263v1.600M511.17 263v1.600M516.63 263v1.600M519.37 263v1.600M522.1 263v1.600M524.83 263v1.600M530.3 263v1.600M533.03 263v1.600M535.77 263v1.600M538.5 263v1.600M543.97 263v1.600M546.7 263v1.600M549.43 263v1.600M552.17 263v1.600M557.63 263v1.600M560.37 263v1.600M563.1 263v1.600M565.83 263v1.600M571.3 263v1.600M574.03 263v1.600M576.77 263v1.600M579.5 263v1.600M584.97 263v1.600M587.7 263v1.600M590.43 263v1.600M593.17 263v1.600M598.63 263v1.600M601.37 263v1.600M604.1 263v1.600M606.83 263v1.600M612.3 263v1.600M615.03 263v1.600M617.77 263v1.600M620.5 263v1.600M625.97 263v1.600M628.7 263v1.600M631.43 263v1.600M634.17 263v1.600M639.63 263v1.600M642.37 263v1.600M645.1 263v1.600M647.83 263v1.600M653.3 263v1.600M656.03 263v1.600M658.77 263v1.600M661.5 263v1.600M666.97 263v1.600M669.7 263v1.600M672.43 263v1.600M675.17 263v1.600M680.63 263v1.600M683.37 263v1.600M686.1 263v1.600M688.83 263v1.600M694.3 263v1.600M697.03 263v1.600M699.77 263v1.600M702.5 263v1.600M707.97 263v1.600M710.7 263v1.600M713.43 263v1.600M716.17 263v1.600M721.63 263v1.600M724.37 263v1.600M727.1 263v1.600M729.83 263v1.600M735.3 263v1.600M738.03 263v1.600M740.77 263v1.600M743.5 263v1.600M748.97 263v1.600M751.7 263v1.600M754.43 263v1.600M757.17 263v1.600M762.63 263v1.600M765.37 263v1.600M768.1 263v1.600M770.83 263v1.600M776.3 263v1.600M779.03 263v1.600M781.77 263v1.600M784.5 263v1.600M789.97 263v1.600M792.7 263v1.600M795.43 263v1.600M798.17 263v1.600M803.63 263v1.600M806.37 263v1.600M809.1 263v1.600M811.83 263v1.600M817.3 263v1.600M820.03 263v1.600M822.77 263v1.600M825.5 263v1.600M830.97 263v1.600M833.7 263v1.600M836.43 263v1.600M839.17 263v1.600M844.63 263v1.600M847.37 263v1.600M850.1 263v1.600M852.83 263v1.600M858.3 263v1.600M861.03 263v1.600M863.77 263v1.600M866.5 263v1.600M871.97 263v1.600M874.7 263v1.600M877.43 263v1.600M880.17 263v1.600" stroke="#555" stroke-width="0.800" fill="none"/>
<g font-family="Liberation Sans, sans-serif" font-size="8.200" font-weight="bold" fill="#0a0a0a"><text transform="translate(147.70 293.2) rotate(-90)" x="0" y="0">08:30</text><text transform="translate(161.33 293.2) rotate(-90)" x="0" y="0">08:40</text><text transform="translate(174.96 293.2) rotate(-90)" x="0" y="0">08:50</text><text transform="translate(188.58 293.2) rotate(-90)" x="0" y="0">09:00</text><text transform="translate(202.21 293.2) rotate(-90)" x="0" y="0">09:10</text><text transform="translate(215.84 293.2) rotate(-90)" x="0" y="0">09:20</text><text transform="translate(229.47 293.2) rotate(-90)" x="0" y="0">09:30</text><text transform="translate(243.10 293.2) rotate(-90)" x="0" y="0">09:40</text><text transform="translate(256.72 293.2) rotate(-90)" x="0" y="0">09:50</text><text transform="translate(270.35 293.2) rotate(-90)" x="0" y="0">10:00</text><text transform="translate(283.98 293.2) rotate(-90)" x="0" y="0">10:10</text><text transform="translate(297.61 293.2) rotate(-90)" x="0" y="0">10:20</text><text transform="translate(311.24 293.2) rotate(-90)" x="0" y="0">10:30</text><text transform="translate(324.86 293.2) rotate(-90)" x="0" y="0">10:40</text><text transform="translate(338.49 293.2) rotate(-90)" x="0" y="0">10:50</text><text transform="translate(352.12 293.2) rotate(-90)" x="0" y="0">11:00</text><text transform="translate(365.75 293.2) rotate(-90)" x="0" y="0">11:10</text><text transform="translate(379.38 293.2) rotate(-90)" x="0" y="0">11:20</text><text transform="translate(393.00 293.2) rotate(-90)" x="0" y="0">11:30</text><text transform="translate(406.63 293.2) rotate(-90)" x="0" y="0">11:40</text><text transform="translate(420.26 293.2) rotate(-90)" x="0" y="0">11:50</text><text transform="translate(433.89 293.2) rotate(-90)" x="0" y="0">12:00</text><text transform="translate(447.52 293.2) rotate(-90)" x="0" y="0">12:10</text><text transform="translate(461.14 293.2) rotate(-90)" x="0" y="0">12:20</text><text transform="translate(474.77 293.2) rotate(-90)" x="0" y="0">12:30</text><text transform="translate(488.40 293.2) rotate(-90)" x="0" y="0">12:40</text><text transform="translate(502.03 293.2) rotate(-90)" x="0" y="0">12:50</text><text transform="translate(515.66 293.2) rotate(-90)" x="0" y="0">13:00</text><text transform="translate(529.28 293.2) rotate(-90)" x="0" y="0">13:10</text><text transform="translate(542.91 293.2) rotate(-90)" x="0" y="0">13:20</text><text transform="translate(556.54 293.2) rotate(-90)" x="0" y="0">13:30</text><text transform="translate(570.17 293.2) rotate(-90)" x="0" y="0">13:40</text><text transform="translate(583.80 293.2) rotate(-90)" x="0" y="0">13:50</text><text transform="translate(597.42 293.2) rotate(-90)" x="0" y="0">14:00</text><text transform="translate(611.05 293.2) rotate(-90)" x="0" y="0">14:10</text><text transform="translate(624.68 293.2) rotate(-90)" x="0" y="0">14:20</text><text transform="translate(638.31 293.2) rotate(-90)" x="0" y="0">14:30</text><text transform="translate(651.94 293.2) rotate(-90)" x="0" y="0">14:40</text><text transform="translate(665.56 293.2) rotate(-90)" x="0" y="0">14:50</text><text transform="translate(679.19 293.2) rotate(-90)" x="0" y="0">15:00</text><text transform="translate(692.82 293.2) rotate(-90)" x="0" y="0">15:10</text><text transform="translate(706.45 293.2) rotate(-90)" x="0" y="0">15:20</text><text transform="translate(720.08 293.2) rotate(-90)" x="0" y="0">15:30</text><text transform="translate(733.70 293.2) rotate(-90)" x="0" y="0">15:40</text><text transform="translate(747.33 293.2) rotate(-90)" x="0" y="0">15:50</text><text transform="translate(760.96 293.2) rotate(-90)" x="0" y="0">16:00</text><text transform="translate(774.59 293.2) rotate(-90)" x="0" y="0">16:10</text><text transform="translate(788.22 293.2) rotate(-90)" x="0" y="0">16:20</text><text transform="translate(801.84 293.2) rotate(-90)" x="0" y="0">16:30</text><text transform="translate(815.47 293.2) rotate(-90)" x="0" y="0">16:40</text><text transform="translate(829.10 293.2) rotate(-90)" x="0" y="0">16:50</text><text transform="translate(842.73 293.2) rotate(-90)" x="0" y="0">17:00</text><text transform="translate(856.36 293.2) rotate(-90)" x="0" y="0">17:10</text><text transform="translate(869.98 293.2) rotate(-90)" x="0" y="0">17:20</text><text transform="translate(883.61 293.2) rotate(-90)" x="0" y="0">17:30</text></g>
<g font-family="Liberation Sans, sans-serif" font-size="8" fill="#000" stroke="#000" stroke-width="0.080"><rect x="547.5" y="304.5" width="14" height="14" fill="#4dfa8c" stroke="#000" stroke-width="1" shape-rendering="crispEdges"/><text x="566.2" y="315.2">06:27 (81%)</text><rect x="637.5" y="304.5" width="14" height="14" fill="#fdf9a9" stroke="#000" stroke-width="1" shape-rendering="crispEdges"/><text x="656.2" y="315.2">00:00 (0%)</text><rect x="728.5" y="304.5" width="14" height="14" fill="#f8f8f8" stroke="#000" stroke-width="1" shape-rendering="crispEdges"/><text x="747.2" y="315.2">01:20 (17%)</text><rect x="819.5" y="304.5" width="14" height="14" fill="#fcb0b0" stroke="#000" stroke-width="1" shape-rendering="crispEdges"/><text x="838.2" y="315.2">00:12 (3%)</text></g>
<rect x="145" y="344" width="739" height="26" fill="#f8f8f8"/><path d="M449 344h76v26h-76z" fill="#f2d7fd"/><path d="M146 344h1.9v26h-1.9zM149 344h2v26h-2zM152 344h0.9v26h-0.9zM154.1 344h0.9v26h-0.9zM160 344h1v26h-1zM166 344h1v26h-1zM168.1 344h7.9v26h-7.9zM180 344h1v26h-1zM184 344h2v26h-2zM189 344h2v26h-2zM193.1 344h2.9v26h-2.9zM198 344h1v26h-1zM200.1 344h5.8v26h-5.8zM207.1 344h2.9v26h-2.9zM212 344h1v26h-1zM214.1 344h2.9v26h-2.9zM218.1 344h5.9v26h-5.9zM228.1 344h2.9v26h-2.9zM234 344h2v26h-2zM237.1 344h1.65v26h-1.65zM239.4 344h4.6v26h-4.6zM247 344h2v26h-2zM250 344h8v26h-8zM259 344h1v26h-1zM261 344h12v26h-12zM275 344h1.9v26h-1.9zM278.1 344h0.9v26h-0.9zM281 344h2v26h-2zM284.1 344h3.65v26h-3.65zM289 344h15v26h-15zM305.1 344h3.65v26h-3.65zM310 344h5v26h-5zM319 344h1v26h-1zM321 344h1v26h-1zM323.1 344h5.9v26h-5.9zM332.1 344h5.9v26h-5.9zM339 344h1v26h-1zM343 344h1v26h-1zM352 344h1v26h-1zM354 344h2v26h-2zM358 344h1v26h-1zM366.1 344h20.9v26h-20.9zM388.1 344h1.8v26h-1.8zM402 344h1v26h-1zM404 344h3v26h-3zM408.1 344h5.9v26h-5.9zM416 344h11v26h-11zM429 344h4v26h-4zM434.1 344h14.9v26h-14.9zM563 344h1v26h-1zM565 344h1v26h-1zM569 344h10v26h-10zM580.1 344h3.9v26h-3.9zM585.1 344h2.9v26h-2.9zM593 344h1v26h-1zM595.1 344h2.9v26h-2.9zM599.1 344h4.9v26h-4.9zM611 344h1v26h-1zM615 344h2v26h-2zM619 344h3v26h-3zM624 344h1v26h-1zM627 344h1v26h-1zM630 344h1v26h-1zM633 344h1v26h-1zM635.1 344h1.9v26h-1.9zM642 344h1v26h-1zM644 344h1v26h-1zM646 344h3v26h-3zM653 344h1v26h-1zM655 344h3v26h-3zM660 344h7v26h-7zM670 344h2v26h-2zM675 344h2v26h-2zM678.1 344h1.9v26h-1.9zM681 344h1v26h-1zM683 344h1v26h-1zM686 344h2v26h-2zM689 344h1v26h-1zM691 344h3v26h-3zM697 344h1v26h-1zM699 344h1v26h-1zM701 344h1v26h-1zM705 344h5v26h-5zM712 344h1v26h-1zM718 344h2v26h-2zM721.1 344h2.9v26h-2.9zM728 344h3v26h-3zM733 344h1v26h-1zM735 344h1v26h-1zM739 344h1v26h-1zM745 344h1v26h-1zM749 344h5v26h-5zM755 344h1v26h-1zM758 344h4v26h-4zM765 344h3v26h-3zM770 344h2v26h-2zM773.1 344h6.9v26h-6.9zM781.1 344h3.9v26h-3.9zM786 344h1v26h-1zM788 344h1v26h-1zM792 344h1v26h-1zM794 344h1v26h-1zM796.1 344h3.9v26h-3.9zM804 344h1v26h-1zM807 344h4v26h-4zM812 344h2v26h-2zM819 344h2v26h-2zM822.1 344h4.9v26h-4.9zM829 344h1v26h-1zM832 344h2v26h-2zM835 344h5v26h-5zM848 344h6v26h-6zM856 344h1v26h-1zM866 344h1v26h-1zM868 344h4v26h-4zM873 344h1v26h-1zM876 344h1v26h-1zM882 344h2v26h-2z" fill="#4dfa8c"/><path d="M145 344h1v26h-1zM236 344h1.1v26h-1.1zM347 344h1v26h-1zM629 344h1v26h-1zM844 344h1v26h-1zM872 344h1v26h-1z" fill="#fcabab"/>
<rect x="144" y="383" width="739" height="1" fill="#0a0a0a" shape-rendering="crispEdges"/><path d="M144.9 384v3.600M157.62 384v3.600M170.35 384v3.600M183.07 384v3.600M195.8 384v3.600M208.52 384v3.600M221.24 384v3.600M233.97 384v3.600M246.69 384v3.600M259.42 384v3.600M272.14 384v3.600M284.87 384v3.600M297.59 384v3.600M310.31 384v3.600M323.04 384v3.600M335.76 384v3.600M348.49 384v3.600M361.21 384v3.600M373.93 384v3.600M386.66 384v3.600M399.38 384v3.600M412.11 384v3.600M424.83 384v3.600M437.56 384v3.600M450.28 384v3.600M463.0 384v3.600M475.73 384v3.600M488.45 384v3.600M501.18 384v3.600M513.9 384v3.600M526.62 384v3.600M539.35 384v3.600M552.07 384v3.600M564.8 384v3.600M577.52 384v3.600M590.24 384v3.600M602.97 384v3.600M615.69 384v3.600M628.42 384v3.600M641.14 384v3.600M653.87 384v3.600M666.59 384v3.600M679.31 384v3.600M692.04 384v3.600M704.76 384v3.600M717.49 384v3.600M730.21 384v3.600M742.93 384v3.600M755.66 384v3.600M768.38 384v3.600M781.11 384v3.600M793.83 384v3.600M806.56 384v3.600M819.28 384v3.600M832.0 384v3.600M844.73 384v3.600M857.45 384v3.600M870.18 384v3.600M882.9 384v3.600" stroke="#333" stroke-width="0.900" fill="none"/><path d="M147.44 384v1.600M149.99 384v1.600M152.53 384v1.600M155.08 384v1.600M160.17 384v1.600M162.71 384v1.600M165.26 384v1.600M167.8 384v1.600M172.89 384v1.600M175.44 384v1.600M177.98 384v1.600M180.53 384v1.600M185.62 384v1.600M188.16 384v1.600M190.71 384v1.600M193.25 384v1.600M198.34 384v1.600M200.89 384v1.600M203.43 384v1.600M205.98 384v1.600M211.07 384v1.600M213.61 384v1.600M216.16 384v1.600M218.7 384v1.600M223.79 384v1.600M226.33 384v1.600M228.88 384v1.600M231.42 384v1.600M236.51 384v1.600M239.06 384v1.600M241.6 384v1.600M244.15 384v1.600M249.24 384v1.600M251.78 384v1.600M254.33 384v1.600M256.87 384v1.600M261.96 384v1.600M264.51 384v1.600M267.05 384v1.600M269.6 384v1.600M274.69 384v1.600M277.23 384v1.600M279.78 384v1.600M282.32 384v1.600M287.41 384v1.600M289.96 384v1.600M292.5 384v1.600M295.04 384v1.600M300.13 384v1.600M302.68 384v1.600M305.22 384v1.600M307.77 384v1.600M312.86 384v1.600M315.4 384v1.600M317.95 384v1.600M320.49 384v1.600M325.58 384v1.600M328.13 384v1.600M330.67 384v1.600M333.22 384v1.600M338.31 384v1.600M340.85 384v1.600M343.4 384v1.600M345.94 384v1.600M351.03 384v1.600M353.58 384v1.600M356.12 384v1.600M358.67 384v1.600M363.76 384v1.600M366.3 384v1.600M368.84 384v1.600M371.39 384v1.600M376.48 384v1.600M379.02 384v1.600M381.57 384v1.600M384.11 384v1.600M389.2 384v1.600M391.75 384v1.600M394.29 384v1.600M396.84 384v1.600M401.93 384v1.600M404.47 384v1.600M407.02 384v1.600M409.56 384v1.600M414.65 384v1.600M417.2 384v1.600M419.74 384v1.600M422.29 384v1.600M427.38 384v1.600M429.92 384v1.600M432.47 384v1.600M435.01 384v1.600M440.1 384v1.600M442.64 384v1.600M445.19 384v1.600M447.73 384v1.600M452.82 384v1.600M455.37 384v1.600M457.91 384v1.600M460.46 384v1.600M465.55 384v1.600M468.09 384v1.600M470.64 384v1.600M473.18 384v1.600M478.27 384v1.600M480.82 384v1.600M483.36 384v1.600M485.91 384v1.600M491.0 384v1.600M493.54 384v1.600M496.09 384v1.600M498.63 384v1.600M503.72 384v1.600M506.27 384v1.600M508.81 384v1.600M511.36 384v1.600M516.44 384v1.600M518.99 384v1.600M521.53 384v1.600M524.08 384v1.600M529.17 384v1.600M531.71 384v1.600M534.26 384v1.600M536.8 384v1.600M541.89 384v1.600M544.44 384v1.600M546.98 384v1.600M549.53 384v1.600M554.62 384v1.600M557.16 384v1.600M559.71 384v1.600M562.25 384v1.600M567.34 384v1.600M569.89 384v1.600M572.43 384v1.600M574.98 384v1.600M580.07 384v1.600M582.61 384v1.600M585.16 384v1.600M587.7 384v1.600M592.79 384v1.600M595.33 384v1.600M597.88 384v1.600M600.42 384v1.600M605.51 384v1.600M608.06 384v1.600M610.6 384v1.600M613.15 384v1.600M618.24 384v1.600M620.78 384v1.600M623.33 384v1.600M625.87 384v1.600M630.96 384v1.600M633.51 384v1.600M636.05 384v1.600M638.6 384v1.600M643.69 384v1.600M646.23 384v1.600M648.78 384v1.600M651.32 384v1.600M656.41 384v1.600M658.96 384v1.600M661.5 384v1.600M664.04 384v1.600M669.13 384v1.600M671.68 384v1.600M674.22 384v1.600M676.77 384v1.600M681.86 384v1.600M684.4 384v1.600M686.95 384v1.600M689.49 384v1.600M694.58 384v1.600M697.13 384v1.600M699.67 384v1.600M702.22 384v1.600M707.31 384v1.600M709.85 384v1.600M712.4 384v1.600M714.94 384v1.600M720.03 384v1.600M722.58 384v1.600M725.12 384v1.600M727.67 384v1.600M732.76 384v1.600M735.3 384v1.600M737.84 384v1.600M740.39 384v1.600M745.48 384v1.600M748.02 384v1.600M750.57 384v1.600M753.11 384v1.600M758.2 384v1.600M760.75 384v1.600M763.29 384v1.600M765.84 384v1.600M770.93 384v1.600M773.47 384v1.600M776.02 384v1.600M778.56 384v1.600M783.65 384v1.600M786.2 384v1.600M788.74 384v1.600M791.29 384v1.600M796.38 384v1.600M798.92 384v1.600M801.47 384v1.600M804.01 384v1.600M809.1 384v1.600M811.64 384v1.600M814.19 384v1.600M816.73 384v1.600M821.82 384v1.600M824.37 384v1.600M826.91 384v1.600M829.46 384v1.600M834.55 384v1.600M837.09 384v1.600M839.64 384v1.600M842.18 384v1.600M847.27 384v1.600M849.82 384v1.600M852.36 384v1.600M854.91 384v1.600M860.0 384v1.600M862.54 384v1.600M865.09 384v1.600M867.63 384v1.600M872.72 384v1.600M875.27 384v1.600M877.81 384v1.600M880.36 384v1.600" stroke="#555" stroke-width="0.800" fill="none"/>
<g font-family="Liberation Sans, sans-serif" font-size="8.200" font-weight="bold" fill="#0a0a0a"><text transform="translate(147.80 414.8) rotate(-90)" x="0" y="0">08:30</text><text transform="translate(160.45 414.8) rotate(-90)" x="0" y="0">08:40</text><text transform="translate(173.10 414.8) rotate(-90)" x="0" y="0">08:50</text><text transform="translate(185.76 414.8) rotate(-90)" x="0" y="0">09:00</text><text transform="translate(198.41 414.8) rotate(-90)" x="0" y="0">09:10</text><text transform="translate(211.06 414.8) rotate(-90)" x="0" y="0">09:20</text><text transform="translate(223.71 414.8) rotate(-90)" x="0" y="0">09:30</text><text transform="translate(236.36 414.8) rotate(-90)" x="0" y="0">09:40</text><text transform="translate(249.02 414.8) rotate(-90)" x="0" y="0">09:50</text><text transform="translate(261.67 414.8) rotate(-90)" x="0" y="0">10:00</text><text transform="translate(274.32 414.8) rotate(-90)" x="0" y="0">10:10</text><text transform="translate(286.97 414.8) rotate(-90)" x="0" y="0">10:20</text><text transform="translate(299.62 414.8) rotate(-90)" x="0" y="0">10:30</text><text transform="translate(312.28 414.8) rotate(-90)" x="0" y="0">10:40</text><text transform="translate(324.93 414.8) rotate(-90)" x="0" y="0">10:50</text><text transform="translate(337.58 414.8) rotate(-90)" x="0" y="0">11:00</text><text transform="translate(350.23 414.8) rotate(-90)" x="0" y="0">11:10</text><text transform="translate(362.88 414.8) rotate(-90)" x="0" y="0">11:20</text><text transform="translate(375.54 414.8) rotate(-90)" x="0" y="0">11:30</text><text transform="translate(388.19 414.8) rotate(-90)" x="0" y="0">11:40</text><text transform="translate(400.84 414.8) rotate(-90)" x="0" y="0">11:50</text><text transform="translate(413.49 414.8) rotate(-90)" x="0" y="0">12:00</text><text transform="translate(426.14 414.8) rotate(-90)" x="0" y="0">12:10</text><text transform="translate(438.80 414.8) rotate(-90)" x="0" y="0">12:20</text><text transform="translate(451.45 414.8) rotate(-90)" x="0" y="0">12:30</text><text transform="translate(464.10 414.8) rotate(-90)" x="0" y="0">12:40</text><text transform="translate(476.75 414.8) rotate(-90)" x="0" y="0">12:50</text><text transform="translate(489.40 414.8) rotate(-90)" x="0" y="0">13:00</text><text transform="translate(502.06 414.8) rotate(-90)" x="0" y="0">13:10</text><text transform="translate(514.71 414.8) rotate(-90)" x="0" y="0">13:20</text><text transform="translate(527.36 414.8) rotate(-90)" x="0" y="0">13:30</text><text transform="translate(540.01 414.8) rotate(-90)" x="0" y="0">13:40</text><text transform="translate(552.66 414.8) rotate(-90)" x="0" y="0">13:50</text><text transform="translate(565.32 414.8) rotate(-90)" x="0" y="0">14:00</text><text transform="translate(577.97 414.8) rotate(-90)" x="0" y="0">14:10</text><text transform="translate(590.62 414.8) rotate(-90)" x="0" y="0">14:20</text><text transform="translate(603.27 414.8) rotate(-90)" x="0" y="0">14:30</text><text transform="translate(615.92 414.8) rotate(-90)" x="0" y="0">14:40</text><text transform="translate(628.58 414.8) rotate(-90)" x="0" y="0">14:50</text><text transform="translate(641.23 414.8) rotate(-90)" x="0" y="0">15:00</text><text transform="translate(653.88 414.8) rotate(-90)" x="0" y="0">15:10</text><text transform="translate(666.53 414.8) rotate(-90)" x="0" y="0">15:20</text><text transform="translate(679.18 414.8) rotate(-90)" x="0" y="0">15:30</text><text transform="translate(691.84 414.8) rotate(-90)" x="0" y="0">15:40</text><text transform="translate(704.49 414.8) rotate(-90)" x="0" y="0">15:50</text><text transform="translate(717.14 414.8) rotate(-90)" x="0" y="0">16:00</text><text transform="translate(729.79 414.8) rotate(-90)" x="0" y="0">16:10</text><text transform="translate(742.44 414.8) rotate(-90)" x="0" y="0">16:20</text><text transform="translate(755.10 414.8) rotate(-90)" x="0" y="0">16:30</text><text transform="translate(767.75 414.8) rotate(-90)" x="0" y="0">16:40</text><text transform="translate(780.40 414.8) rotate(-90)" x="0" y="0">16:50</text><text transform="translate(793.05 414.8) rotate(-90)" x="0" y="0">17:00</text><text transform="translate(805.70 414.8) rotate(-90)" x="0" y="0">17:10</text><text transform="translate(818.36 414.8) rotate(-90)" x="0" y="0">17:20</text><text transform="translate(831.01 414.8) rotate(-90)" x="0" y="0">17:30</text><text transform="translate(843.66 414.8) rotate(-90)" x="0" y="0">17:40</text><text transform="translate(856.31 414.8) rotate(-90)" x="0" y="0">17:50</text><text transform="translate(868.96 414.8) rotate(-90)" x="0" y="0">18:00</text><text transform="translate(881.62 414.8) rotate(-90)" x="0" y="0">18:10</text></g>
<g font-family="Liberation Sans, sans-serif" font-size="8" fill="#000" stroke="#000" stroke-width="0.080"><rect x="547.5" y="426.5" width="14" height="14" fill="#4dfa8c" stroke="#000" stroke-width="1" shape-rendering="crispEdges"/><text x="566.2" y="437.2">05:01 (63%)</text><rect x="637.5" y="426.5" width="14" height="14" fill="#fdf9a9" stroke="#000" stroke-width="1" shape-rendering="crispEdges"/><text x="656.2" y="437.2">00:00 (0%)</text><rect x="728.5" y="426.5" width="14" height="14" fill="#f8f8f8" stroke="#000" stroke-width="1" shape-rendering="crispEdges"/><text x="747.2" y="437.2">03:39 (46%)</text><rect x="819.5" y="426.5" width="14" height="14" fill="#fcb0b0" stroke="#000" stroke-width="1" shape-rendering="crispEdges"/><text x="838.2" y="437.2">00:01 (0%)</text></g></svg>
<!-- s_bottom -->
<div class="t" style="left:97.50px;top:491.00px;font-size:11px;color:#222;letter-spacing:0.112px;">Pejy: 1 an'ny 1</div>
<div class="sep" style="left:224px;top:487px;height:15px;background:#b9b9b9"></div>
<div class="sep" style="left:1004px;top:487px;height:15px;background:#b9b9b9"></div>
<div class="a" style="left:18px;top:504px;width:117px;height:27px;box-sizing:border-box;border-left:1px solid #d6d6d6;border-right:1px solid #d6d6d6;border-bottom:2px solid #1b9ce2;background:#fff"></div>
<svg style="left:30px;top:509.5px" width="13" height="16" viewBox="0 0 13 16"><rect x="0.5" y="2.5" width="12" height="13" fill="#fdfdfd" stroke="#6e6e6e"/><rect x="3.5" y="0.5" width="6" height="3.6" rx="1" fill="#e8e8e8" stroke="#6e6e6e"/><path d="M3 6.5h7M3 8.5h7" stroke="#b5b5b5" stroke-width="1"/><rect x="2" y="11.5" width="2.6" height="3.5" fill="#3cb54a"/><rect x="5.2" y="9.3" width="2.6" height="5.7" fill="#2b9fe0"/><rect x="8.4" y="11" width="2.6" height="4" fill="#e8534f"/></svg>
<div class="t" style="left:49.50px;top:512.00px;font-size:11px;color:#1b9ce2;letter-spacing:-0.122px;">TATITRA - Time</div>
<div class="sep" style="left:136px;top:534px;height:15px;background:#b9b9b9"></div>
<div class="sep" style="left:272px;top:534px;height:15px;background:#b9b9b9"></div>
<div class="sep" style="left:415px;top:534px;height:15px;background:#b9b9b9"></div>
<div class="sep" style="left:534px;top:534px;height:15px;background:#b9b9b9"></div>
<div class="sep" style="left:647px;top:534px;height:15px;background:#b9b9b9"></div>
<div class="sep" style="left:982px;top:534px;height:15px;background:#b9b9b9"></div>
<div class="t" style="left:55.80px;top:537.00px;font-size:11px;color:#222;letter-spacing:0.217px;">7.0.9064.10</div>
<div class="t" style="left:178.30px;top:537.00px;font-size:11px;color:#222;letter-spacing:0.085px;">localhost (utf8)</div>
<div class="t" style="left:314.00px;top:537.00px;font-size:11px;color:#222;letter-spacing:-0.254px;">NIKOLAY (MAIN)</div>
<div class="t" style="left:458.20px;top:537.00px;font-size:11px;color:#222;letter-spacing:0.095px;">25.06.2021</div>
<div class="t" style="left:562.50px;top:537.00px;font-size:11px;color:#222;letter-spacing:0.217px;">0:00:00:963</div>
<svg style="left:0;top:480px" width="1024" height="88" viewBox="0 480 1024 88"><circle cx="30.5" cy="541.3" r="8" fill="#277fbc"/><circle cx="30.5" cy="537.4" r="1.150" fill="#fff"/><path d="M30.5 539.8v5" stroke="#fff" stroke-width="2"/>
<g transform="translate(148.2 534.3)"><defs><linearGradient id="dbg" x1="0" y1="0" x2="1" y2="0"><stop offset="0" stop-color="#e8872a"/><stop offset="0.45" stop-color="#fde3a4"/><stop offset="1" stop-color="#e58426"/></linearGradient></defs><path d="M0.500 2.500v9c0 1.400 2.400 2.200 5.300 2.200s5.300-0.800 5.300-2.200v-9z" fill="url(#dbg)" stroke="#d47a24" stroke-width="0.700"/><path d="M0.500 5.600c0 1.400 2.400 2.200 5.300 2.200s5.300-0.800 5.300-2.200M0.500 8.700c0 1.400 2.400 2.200 5.300 2.200s5.300-0.800 5.300-2.200" fill="none" stroke="#d8802a" stroke-width="0.800"/><ellipse cx="5.800" cy="2.500" rx="5.300" ry="2" fill="#fbd590" stroke="#d47a24" stroke-width="0.700"/></g>
<g transform="translate(283 534.5)"><path d="M0.300 13c0-3.600 2.600-5 7-5s7 1.400 7 5z" fill="#6fc04a" stroke="#4f9a30" stroke-width="0.600"/><circle cx="7.300" cy="4.400" r="3.500" fill="#f2c9a0" stroke="#c8926a" stroke-width="0.500"/><path d="M3.800 3.800c0.200-3.800 6.800-3.800 7 0-2-1.400-5-1.400-7 0z" fill="#c86a34"/></g>
<g transform="translate(426 533.7)"><rect x="0.500" y="0.500" width="13" height="13.500" fill="#fff" stroke="#5f7fc8"/><rect x="1" y="1" width="12" height="3.200" fill="#e6463c"/><text x="7" y="12.300" font-size="8.500" font-weight="bold" text-anchor="middle" fill="#2a3f78" font-family="Liberation Sans, sans-serif">31</text></g>
<rect x="1002.5" y="538.5" width="2" height="2" fill="#8a8a8a"/><rect x="998.5" y="542.5" width="2" height="2" fill="#8a8a8a"/><rect x="1002.5" y="542.5" width="2" height="2" fill="#8a8a8a"/><rect x="994.5" y="546.5" width="2" height="2" fill="#8a8a8a"/><rect x="998.5" y="546.5" width="2" height="2" fill="#8a8a8a"/><rect x="1002.5" y="546.5" width="2" height="2" fill="#8a8a8a"/></svg>
</body></html>
